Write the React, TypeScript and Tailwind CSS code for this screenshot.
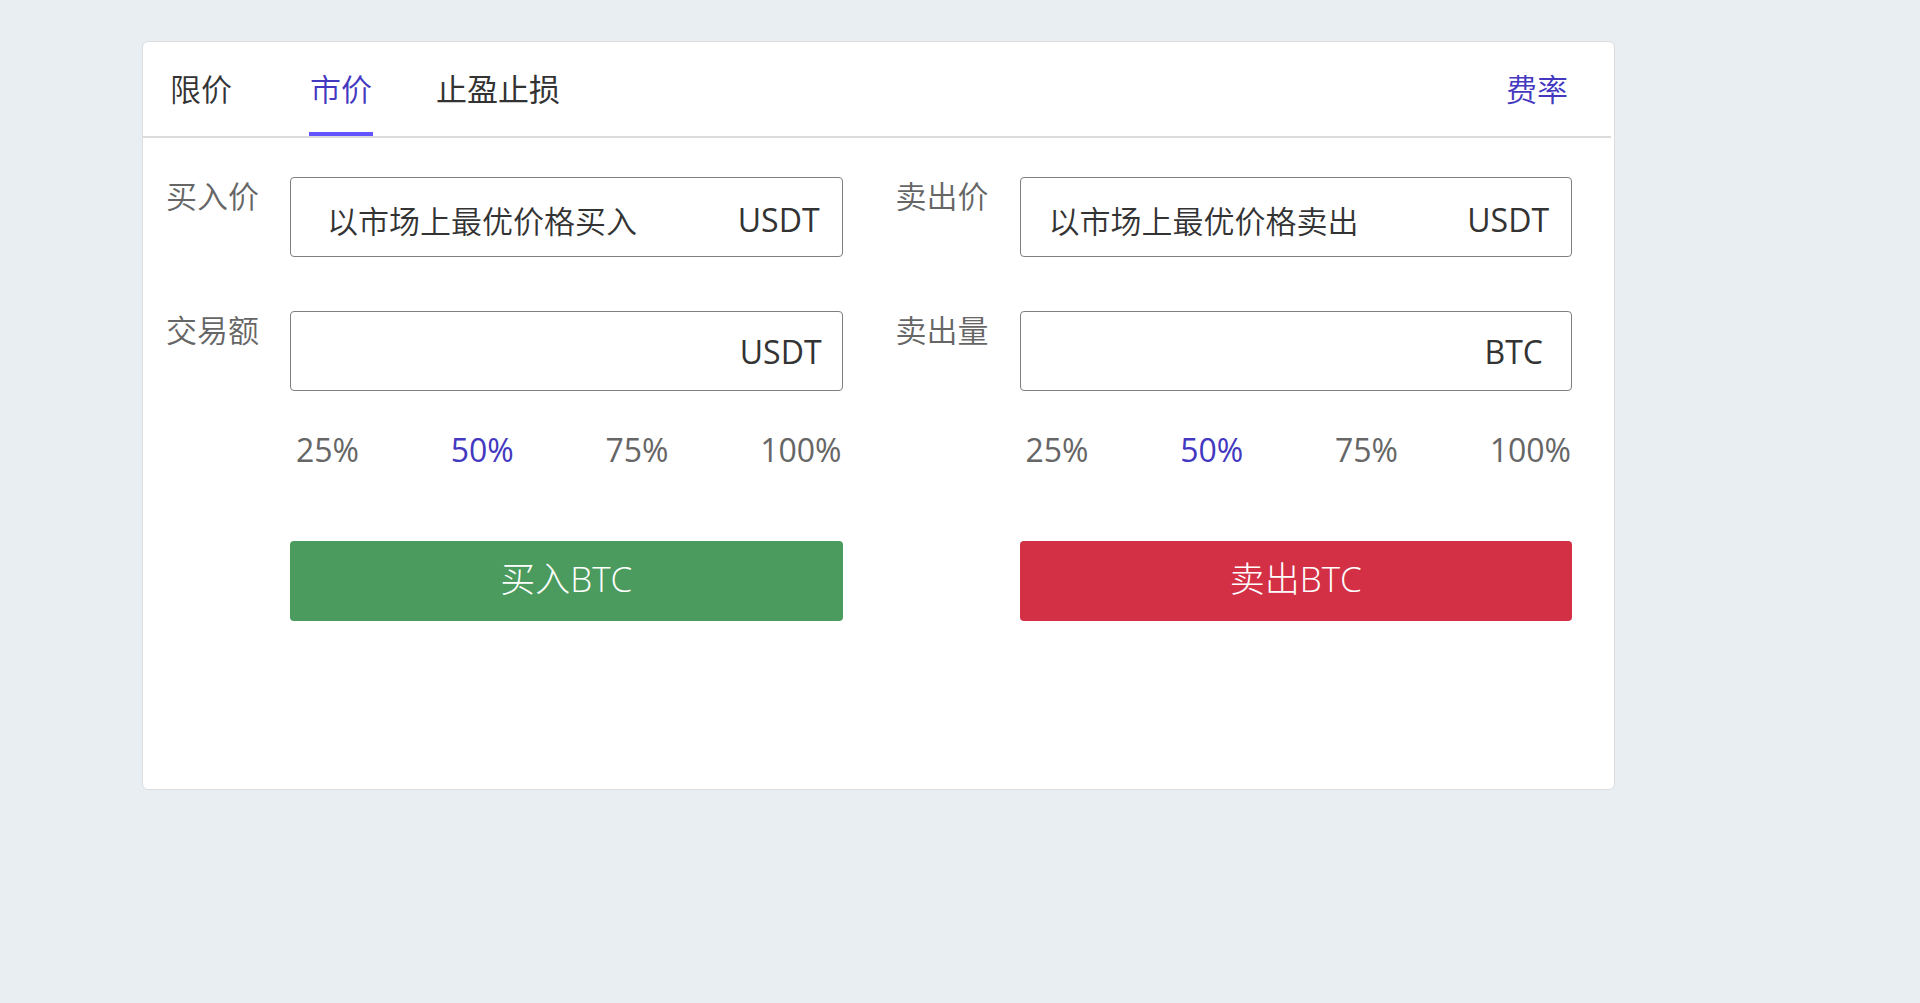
import { useState } from "react";

type FieldProps = {
  id: string;
  label: string;
  unit: string;
  value?: string;
  inputClass: string;
  unitClass: string;
};

function Field({ id, label, unit, value, inputClass, unitClass }: FieldProps) {
  return (
    <div className="flex items-start">
      <label htmlFor={id} className="w-[124px] shrink-0 text-[31px] leading-[39px] text-[#666]">
        {label}
      </label>
      <div className="flex h-20 min-w-0 flex-1 items-center rounded-[4px] border border-[#808080]">
        <input
          id={id}
          type="text"
          defaultValue={value}
          readOnly={value !== undefined}
          className={`h-full min-w-0 flex-1 bg-transparent text-[31px] text-[#333] outline-none ${inputClass}`}
        />
        <span className={`text-[32px] font-normal text-[#333] ${unitClass}`}>{unit}</span>
      </div>
    </div>
  );
}

const percents = ["25%", "50%", "75%", "100%"];

function PercentRow({ name }: { name: string }) {
  const [active, setActive] = useState("50%");
  return (
    <div role="group" aria-label={name} className="mt-[39px] mr-px ml-[130px] flex justify-between">
      {percents.map((p) => (
        <button
          key={p}
          type="button"
          onClick={() => setActive(p)}
          className={`text-[32px] leading-[40px] font-normal ${p === active ? "text-[#4338bf]" : "text-[#666]"}`}
        >
          {p}
        </button>
      ))}
    </div>
  );
}

export default function App() {
  return (
    <main className="min-h-screen bg-[#e9eef2] pt-[41px] pr-[305px] pb-10 pl-[142px] font-['Open_Sans','Noto_Sans_CJK_SC',sans-serif]">
      <section className="rounded-md border border-[#dcdcdc] bg-white pb-[168px]">
        <header className="mr-[3px] flex h-24 items-stretch border-b-2 border-[#dcdcdc] pr-[43px] pl-[27px] text-[31px] leading-[94px] text-[#333]">
          <nav className="flex flex-1">
            <button type="button" className="mr-[77px] font-[350]">限价</button>
            <button type="button" aria-current="true" className="relative mr-[63px] px-px font-[350] text-[#4338bf]">
              市价
              <span className="absolute inset-x-0 bottom-0 h-1 bg-[#6254ff]" />
            </button>
            <button type="button">止盈止损</button>
          </nav>
          <a href="#fees" className="font-[350] text-[#4338bf]">费率</a>
        </header>

        <div className="grid grid-cols-2 gap-[53px] pt-[39px] pr-[42px] pl-[23px] font-[350]">
          <form>
            <Field id="buy-price" label="买入价" unit="USDT" value="以市场上最优价格买入" inputClass="pl-9 pt-1" unitClass="pt-1.5 pr-[22px]" />
            <div className="h-[54px]" />
            <Field id="buy-amount" label="交易额" unit="USDT" inputClass="pl-9" unitClass="pt-0.5 pr-5" />
            <PercentRow name="买入比例" />
            <button type="button" className="mt-[71px] ml-[124px] flex h-20 w-[calc(100%-124px)] items-center justify-center rounded-[4px] bg-[#4b9b5e] pb-1 text-[35px] font-light text-white">
              买入BTC
            </button>
          </form>
          <form>
            <Field id="sell-price" label="卖出价" unit="USDT" value="以市场上最优价格卖出" inputClass="pl-7 pt-1" unitClass="pt-1.5 pr-[22px]" />
            <div className="h-[54px]" />
            <Field id="sell-amount" label="卖出量" unit="BTC" inputClass="pl-7" unitClass="pt-0.5 pr-7" />
            <PercentRow name="卖出比例" />
            <button type="button" className="mt-[71px] ml-[124px] flex h-20 w-[calc(100%-124px)] items-center justify-center rounded-[4px] bg-[#d33046] pb-1 text-[35px] font-light text-white">
              卖出BTC
            </button>
          </form>
        </div>
      </section>
    </main>
  );
}
